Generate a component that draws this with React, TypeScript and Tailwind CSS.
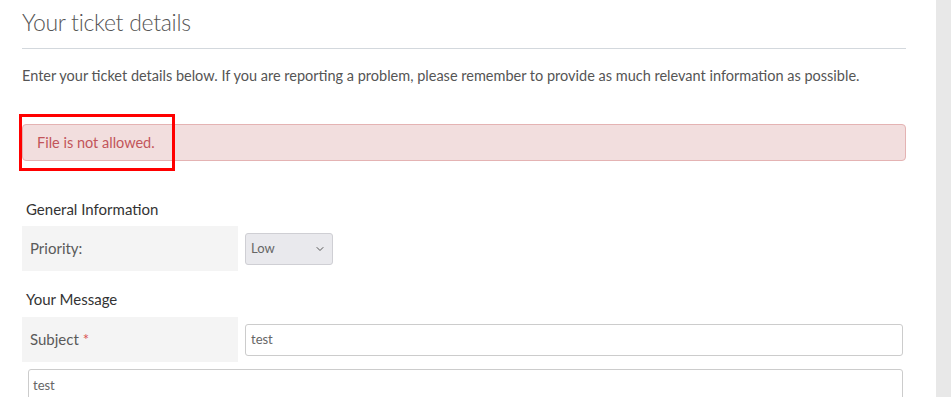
import { ChevronDown } from "lucide-react";

const FONT = "font-['Lato','Open_Sans',sans-serif]";

function FieldRow({ label, required, children }: { label: string; required?: boolean; children: React.ReactNode }) {
    return (
        <div className="flex h-[45px] items-center">
            <div className="flex h-full w-[216px] shrink-0 items-center bg-[#f4f4f4] pl-[8px] text-[15px] text-[#5a5a5a]">
                {label}
                {required && <span className="ml-[4px] text-[#d9534f]">*</span>}
            </div>
            <div className="ml-[7px] flex-1">{children}</div>
        </div>
    );
}

export default function App() {
    return (
        <div className={`flex h-[397px] overflow-hidden bg-white ${FONT}`}>
            <div className="w-[936px] shrink-0 pl-[22px] pr-[30px]">
                {/* ── Header ───────────────────────────────── */}
                <h1 className="mt-[6px] text-[23px] leading-[32px] font-light tracking-[-0.3px] text-[#555]">Your ticket details</h1>
                <div className="mt-[10px] border-b border-[#d3d8dd]" />
                <p className="mt-[16px] text-[14.5px] leading-[22px] text-[#555]">
                    Enter your ticket details below. If you are reporting a problem, please remember to provide as much relevant information as possible.
                </p>

                {/* ── Alert ────────────────────────────────── */}
                <div className="relative mt-[37px] flex h-[37px] items-center rounded-[4px] border border-[#e4b3b3] bg-[#f2dede] px-[14px] text-[14.5px] text-[#c2555a]">
                    File is not allowed.
                    <div className="absolute left-[-4px] top-[-11px] h-[57px] w-[156px] border-[3px] border-[#ff0000]" />
                </div>

                {/* ── General Information ──────────────────── */}
                <h3 className="mt-[37px] pl-[4px] text-[15px] leading-[22px] text-[#333]">General Information</h3>
                <div className="mt-[6px]">
                    <FieldRow label="Priority:">
                        <div className="flex h-[32px] w-[88px] items-center justify-between rounded-[3px] border border-[#cfcfd4] bg-[#e9e9ed] pl-[5px] pr-[6px] text-[13px] text-[#666]">
                            Low
                            <ChevronDown size={12} strokeWidth={2} className="text-[#555]" />
                        </div>
                    </FieldRow>
                </div>

                {/* ── Your Message ─────────────────────────── */}
                <h3 className="mt-[17px] pl-[4px] text-[15px] leading-[22px] text-[#333]">Your Message</h3>
                <div className="mt-[7px]">
                    <FieldRow label="Subject" required>
                        <div className="flex h-[32px] w-[658px] items-center rounded-[3px] border border-[#ccc] bg-white pl-[5px] text-[13px] text-[#666]">
                            test
                        </div>
                    </FieldRow>
                </div>
                <div className="ml-[6px] mt-[7px] h-[60px] w-[875px] rounded-[3px] border border-[#ccc] bg-white px-[4px] pt-[6px] text-[13px] text-[#666]">
                    test
                </div>
            </div>
            <div className="flex-1 bg-[#e8e8e8]" />
        </div>
    );
}
